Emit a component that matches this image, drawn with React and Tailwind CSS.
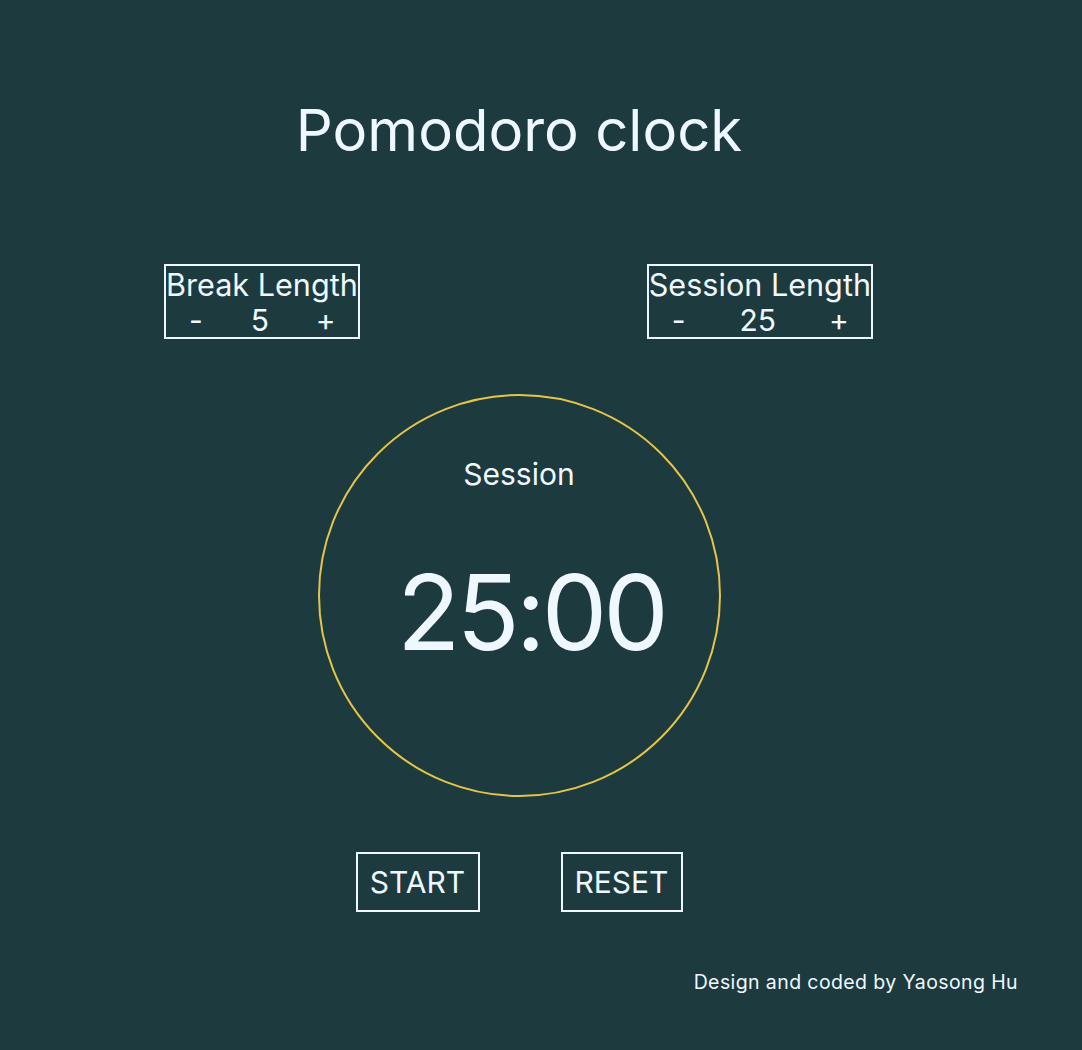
import React, { useState } from 'react'

function LengthBox({ label, value, onDec, onInc }) {
  return (
    <div className="flex flex-col items-center border-2 border-[#f0f8ff] leading-[37px]">
      <div className="text-[30.6px] whitespace-nowrap">{label}</div>
      <div className="flex w-full items-center justify-between pl-[22px] pr-[26px] text-[30px] leading-[34px]">
        <button type="button" onClick={onDec} className="w-4 text-center">-</button>
        <span>{value}</span>
        <button type="button" onClick={onInc} className="w-4 text-center">+</button>
      </div>
    </div>
  )
}

export default function App() {
  const [breakLen, setBreakLen] = useState(5)
  const [sessionLen, setSessionLen] = useState(25)

  return (
    <div
      className="min-h-[1050px] w-full bg-[#1d3a3f] text-[#f0f8ff]"
      style={{ fontFamily: 'Inter, "Noto Sans", sans-serif' }}
    >
      <div className="flex w-[1038px] flex-col items-center pt-[88px]">
        <h1 className="text-[58px] leading-[84px]">Pomodoro clock</h1>

        <div className="mt-[92px] flex w-full justify-between pl-[164px] pr-[165px]">
          <LengthBox
            label="Break Length"
            value={breakLen}
            onDec={() => setBreakLen((v) => Math.max(1, v - 1))}
            onInc={() => setBreakLen((v) => v + 1)}
          />
          <LengthBox
            label="Session Length"
            value={sessionLen}
            onDec={() => setSessionLen((v) => Math.max(1, v - 1))}
            onInc={() => setSessionLen((v) => v + 1)}
          />
        </div>

        <div className="mt-[55px] flex h-[403px] w-[403px] flex-col items-center rounded-full border-2 border-[#e3c548]">
          <div className="mt-[58px] text-[30px] leading-[40px]">Session</div>
          <div className="mt-[58px] ml-[24px] text-[104px] leading-[120px] tracking-[-4px]">25:00</div>
        </div>

        <div className="mt-[55px] flex gap-[81px]">
          <button type="button" className="h-[60px] w-[124px] border-2 border-[#f0f8ff] text-[30px]">START</button>
          <button type="button" className="h-[60px] w-[122px] border-2 border-[#f0f8ff] text-[30px]">RESET</button>
        </div>

        <div className="mt-[56px] flex w-full justify-end pr-[20px] text-[19.5px] tracking-[0.4px]">
          Design and coded by Yaosong Hu
        </div>
      </div>
    </div>
  )
}
